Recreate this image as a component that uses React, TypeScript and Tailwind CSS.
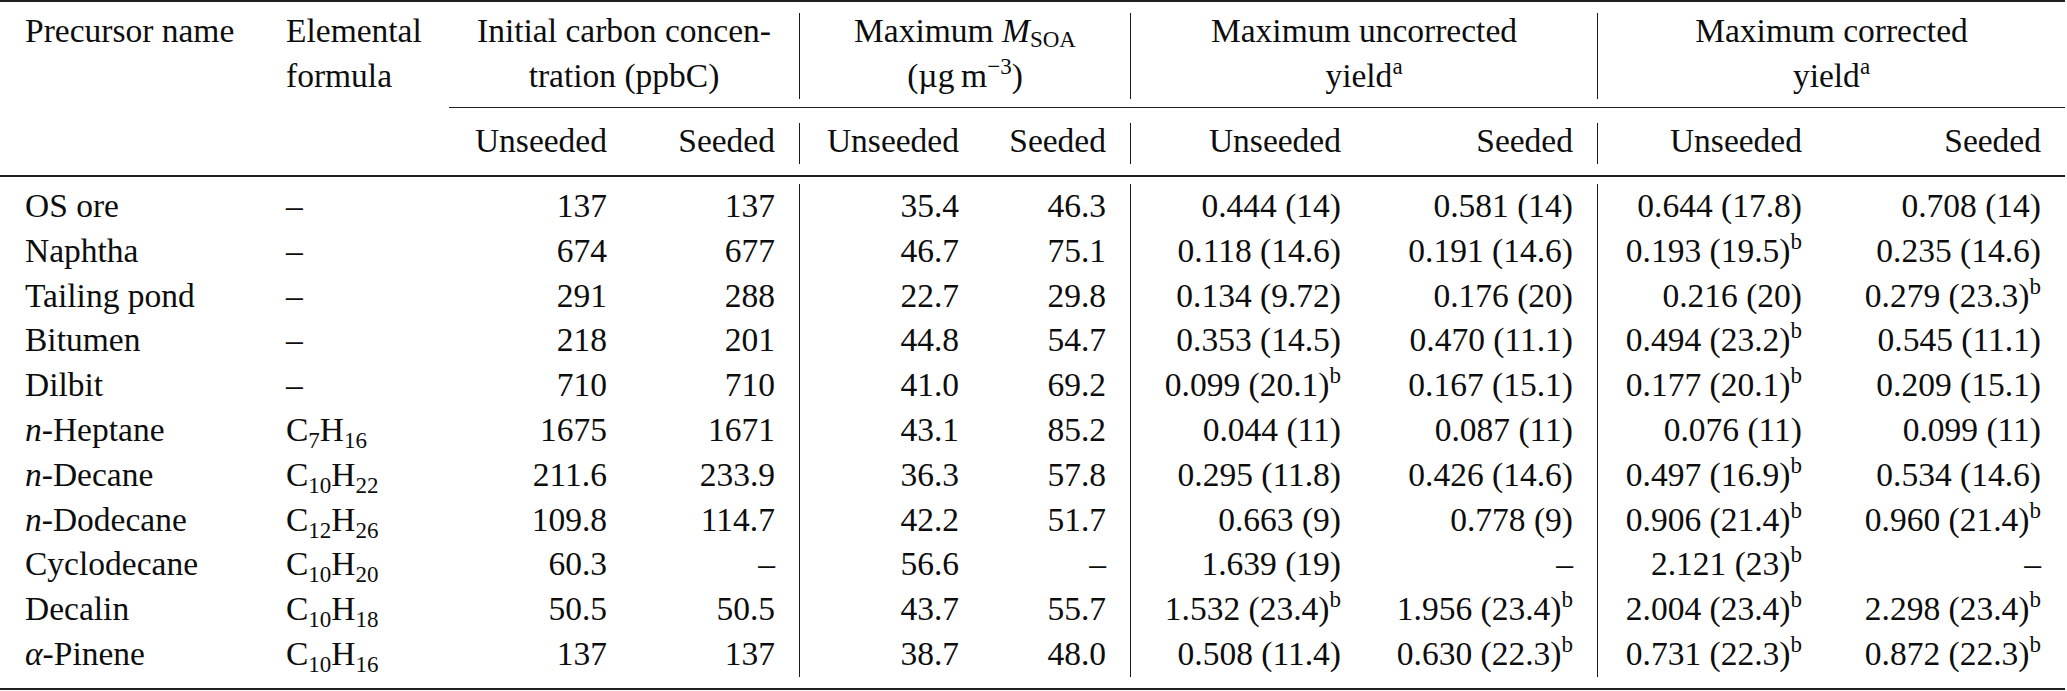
import React from "react";

interface RowData {
  name: React.ReactNode;
  formula: React.ReactNode;
  values: string[];
}

interface ChildrenProps {
  children: React.ReactNode;
}

const GRID =
  "grid grid-cols-[261px_188px_182px_169px_183px_148px_234px_233px_228px_239px]";

const Sup: React.FC<ChildrenProps> = ({ children }) => (
  <span className="text-[23px] leading-none align-[13px]">{children}</span>
);

const Sub: React.FC<ChildrenProps> = ({ children }) => (
  <span className="text-[23px] leading-none align-[-7px]">{children}</span>
);

const Formula: React.FC<{ c: string; h: string }> = ({ c, h }) => (
  <>
    C<Sub>{c}</Sub>H<Sub>{h}</Sub>
  </>
);

const rows: RowData[] = [
  {
    name: "OS ore",
    formula: "–",
    values: ["137", "137", "35.4", "46.3", "0.444 (14)", "0.581 (14)", "0.644 (17.8)", "0.708 (14)"],
  },
  {
    name: "Naphtha",
    formula: "–",
    values: ["674", "677", "46.7", "75.1", "0.118 (14.6)", "0.191 (14.6)", "0.193 (19.5)^b", "0.235 (14.6)"],
  },
  {
    name: "Tailing pond",
    formula: "–",
    values: ["291", "288", "22.7", "29.8", "0.134 (9.72)", "0.176 (20)", "0.216 (20)", "0.279 (23.3)^b"],
  },
  {
    name: "Bitumen",
    formula: "–",
    values: ["218", "201", "44.8", "54.7", "0.353 (14.5)", "0.470 (11.1)", "0.494 (23.2)^b", "0.545 (11.1)"],
  },
  {
    name: "Dilbit",
    formula: "–",
    values: ["710", "710", "41.0", "69.2", "0.099 (20.1)^b", "0.167 (15.1)", "0.177 (20.1)^b", "0.209 (15.1)"],
  },
  {
    name: (
      <>
        <i>n</i>-Heptane
      </>
    ),
    formula: <Formula c="7" h="16" />,
    values: ["1675", "1671", "43.1", "85.2", "0.044 (11)", "0.087 (11)", "0.076 (11)", "0.099 (11)"],
  },
  {
    name: (
      <>
        <i>n</i>-Decane
      </>
    ),
    formula: <Formula c="10" h="22" />,
    values: ["211.6", "233.9", "36.3", "57.8", "0.295 (11.8)", "0.426 (14.6)", "0.497 (16.9)^b", "0.534 (14.6)"],
  },
  {
    name: (
      <>
        <i>n</i>-Dodecane
      </>
    ),
    formula: <Formula c="12" h="26" />,
    values: ["109.8", "114.7", "42.2", "51.7", "0.663 (9)", "0.778 (9)", "0.906 (21.4)^b", "0.960 (21.4)^b"],
  },
  {
    name: "Cyclodecane",
    formula: <Formula c="10" h="20" />,
    values: ["60.3", "–", "56.6", "–", "1.639 (19)", "–", "2.121 (23)^b", "–"],
  },
  {
    name: "Decalin",
    formula: <Formula c="10" h="18" />,
    values: ["50.5", "50.5", "43.7", "55.7", "1.532 (23.4)^b", "1.956 (23.4)^b", "2.004 (23.4)^b", "2.298 (23.4)^b"],
  },
  {
    name: (
      <>
        <i>α</i>-Pinene
      </>
    ),
    formula: <Formula c="10" h="16" />,
    values: ["137", "137", "38.7", "48.0", "0.508 (11.4)", "0.630 (22.3)^b", "0.731 (22.3)^b", "0.872 (22.3)^b"],
  },
];

// value columns that carry a vertical rule on their right side
const ruled = [1, 3, 5];

const Value: React.FC<{ text: string }> = ({ text }) => {
  if (text.endsWith("^b")) {
    return (
      <>
        {text.slice(0, -2)}
        <Sup>b</Sup>
      </>
    );
  }
  return <>{text}</>;
};

const GroupHeader: React.FC<{ lines: React.ReactNode[]; ruledRight?: boolean }> = ({
  lines,
  ruledRight,
}) => (
  <div
    className={`col-span-2 h-[86px] text-center ${
      ruledRight ? "border-r border-[#1a1a1a]" : ""
    }`}
  >
    <div className="-mt-[5px] leading-[45px]">
      {lines.map((line, i) => (
        <div key={i}>{line}</div>
      ))}
    </div>
  </div>
);

const App: React.FC = () => {
  return (
    <div className="w-[2067px] h-[691px] bg-white text-[#0d0d0d] font-['Liberation_Serif',serif] text-[33.5px]">
      <div className="w-[2065px]">
        {/* top rule */}
        <div className="h-[2px] bg-[#1f1f1f]" />

        {/* header, first block */}
        <div className={`${GRID} mt-[11px]`}>
          <div className="h-[86px] pl-[25px]">
            <div className="-mt-[5px] leading-[45px]">Precursor name</div>
          </div>
          <div className="h-[86px] pl-[25px]">
            <div className="-mt-[5px] leading-[45px]">
              <div>Elemental</div>
              <div>formula</div>
            </div>
          </div>
          <GroupHeader lines={["Initial carbon concen-", "tration (ppbC)"]} ruledRight />
          <GroupHeader
            lines={[
              <>
                Maximum <i>M</i>
                <span className="text-[23px] leading-none align-[-5px]">SOA</span>
              </>,
              <>
                (µg{"\u2009"}m<Sup>−3</Sup>)
              </>,
            ]}
            ruledRight
          />
          <GroupHeader
            lines={[
              "Maximum uncorrected",
              <>
                yield<Sup>a</Sup>
              </>,
            ]}
            ruledRight
          />
          <GroupHeader
            lines={[
              "Maximum corrected",
              <>
                yield<Sup>a</Sup>
              </>,
            ]}
          />
        </div>

        {/* partial rule under the grouped headings */}
        <div className={`${GRID} mt-[8px]`}>
          <div className="col-start-3 col-span-8 h-px bg-[#1f1f1f]" />
        </div>

        {/* header, second block */}
        <div className={`${GRID} mt-[15px]`}>
          <div className="h-[41px]" />
          <div className="h-[41px]" />
          {["Unseeded", "Seeded", "Unseeded", "Seeded", "Unseeded", "Seeded", "Unseeded", "Seeded"].map(
            (label, i) => (
              <div
                key={i}
                className={`h-[41px] pr-[24px] text-right ${
                  ruled.includes(i) ? "border-r border-[#1a1a1a]" : ""
                }`}
              >
                <div className="-mt-[5px] leading-[45px]">{label}</div>
              </div>
            )
          )}
        </div>

        {/* mid rule */}
        <div className="mt-[11px] h-[2px] bg-[#1f1f1f]" />

        {/* body */}
        <div className={`${GRID} mt-[7px]`}>
          {rows.map((row, r) => (
            <React.Fragment key={r}>
              <div className="h-[44.8px] leading-[44.8px] pl-[25px] whitespace-nowrap">{row.name}</div>
              <div className="h-[44.8px] leading-[44.8px] pl-[25px] whitespace-nowrap">{row.formula}</div>
              {row.values.map((v, i) => (
                <div
                  key={i}
                  className={`h-[44.8px] leading-[44.8px] pr-[24px] text-right whitespace-nowrap ${
                    ruled.includes(i) ? "border-r border-[#1a1a1a]" : ""
                  }`}
                >
                  <Value text={v} />
                </div>
              ))}
            </React.Fragment>
          ))}
        </div>

        {/* bottom rule */}
        <div className="mt-[11px] h-[2px] bg-[#1f1f1f]" />
      </div>
    </div>
  );
};

export default App;
